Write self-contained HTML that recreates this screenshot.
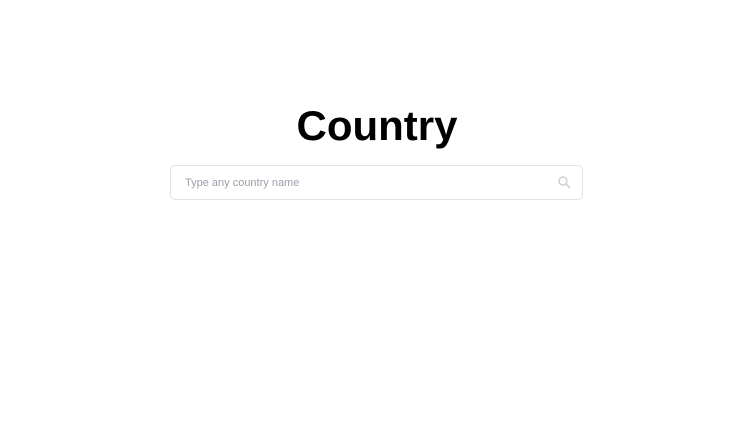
<!DOCTYPE html>
<html><head><meta charset="utf-8"><style>
html,body{margin:0;padding:0;background:#fff;width:754px;height:437px;overflow:hidden;font-family:"Liberation Sans",sans-serif}
h1{position:absolute;left:0;width:754px;top:98px;margin:0;text-align:center;font-size:42px;font-weight:bold;color:#000;line-height:56px}
.box{position:absolute;left:170px;top:165px;width:411px;height:33px;border:1px solid #e2e2e2;border-radius:5px;box-sizing:content-box}
.ph{position:absolute;left:14px;top:0;line-height:35px;font-size:11px;color:#9aa0ab}
svg{position:absolute;left:387px;top:10px}
</style></head><body>
<h1>Country</h1>
<div class="box"><span class="ph">Type any country name</span>
<svg width="13" height="13" viewBox="0 0 13 13"><circle cx="5" cy="5" r="4" fill="none" stroke="#c8c8c8" stroke-width="1.2"/><path d="M8 8L12 12" stroke="#c8c8c8" stroke-width="1.3"/></svg>
</div>
</body></html>
